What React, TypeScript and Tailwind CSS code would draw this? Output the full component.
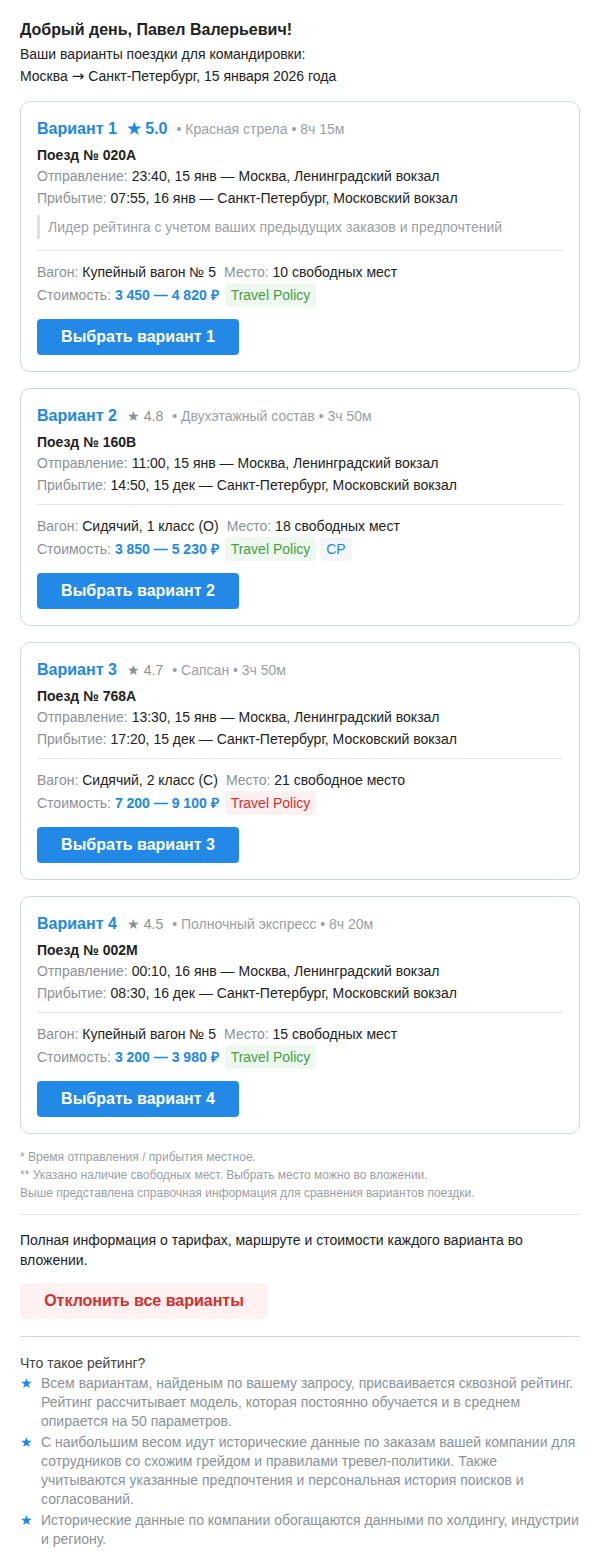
import React from "react";

type V = {
  n: number;
  rating: string;
  top?: boolean;
  name: string;
  dur: string;
  train: string;
  dep: string;
  arr: string;
  note?: string;
  wagon: string;
  seats: string;
  price: string;
  ok: boolean;
  cp?: boolean;
};

const variants: V[] = [
  {
    n: 1,
    rating: "5.0",
    top: true,
    name: "Красная стрела",
    dur: "8ч 15м",
    train: "020А",
    dep: "23:40, 15 янв — Москва, Ленинградский вокзал",
    arr: "07:55, 16 янв — Санкт-Петербург, Московский вокзал",
    note: "Лидер рейтинга с учетом ваших предыдущих заказов и предпочтений",
    wagon: "Купейный вагон № 5",
    seats: "10 свободных мест",
    price: "3 450 — 4 820 ₽",
    ok: true,
  },
  {
    n: 2,
    rating: "4.8",
    name: "Двухэтажный состав",
    dur: "3ч 50м",
    train: "160В",
    dep: "11:00, 15 янв — Москва, Ленинградский вокзал",
    arr: "14:50, 15 дек — Санкт-Петербург, Московский вокзал",
    wagon: "Сидячий, 1 класс (О)",
    seats: "18 свободных мест",
    price: "3 850 — 5 230 ₽",
    ok: true,
    cp: true,
  },
  {
    n: 3,
    rating: "4.7",
    name: "Сапсан",
    dur: "3ч 50м",
    train: "768А",
    dep: "13:30, 15 янв — Москва, Ленинградский вокзал",
    arr: "17:20, 15 дек — Санкт-Петербург, Московский вокзал",
    wagon: "Сидячий, 2 класс (С)",
    seats: "21 свободное место",
    price: "7 200 — 9 100 ₽",
    ok: false,
  },
  {
    n: 4,
    rating: "4.5",
    name: "Полночный экспресс",
    dur: "8ч 20м",
    train: "002М",
    dep: "00:10, 16 янв — Москва, Ленинградский вокзал",
    arr: "08:30, 16 дек — Санкт-Петербург, Московский вокзал",
    wagon: "Купейный вагон № 5",
    seats: "15 свободных мест",
    price: "3 200 — 3 980 ₽",
    ok: true,
  },
];

function Card({ v }: { v: V }) {
  return (
    <div className="mb-4 rounded-[10px] border border-[#cfd8dc] px-4 pt-4 pb-4">
      <div className="flex items-baseline leading-[22px]">
        <span className="text-[16px] font-bold text-[#1e88e5]">Вариант {v.n}</span>
        {v.top ? (
          <span className="ml-[10px] text-[16px] font-bold text-[#1e88e5]">★ {v.rating}</span>
        ) : (
          <span className="ml-[10px] text-[14px] text-[#8a9299]">★ {v.rating}</span>
        )}
        <span className="ml-[9px] text-[14px] text-[#9aa0a6]">
          • {v.name} • {v.dur}
        </span>
      </div>
      <div className="mt-[5px] text-[14px] font-bold leading-[20px] text-[#222]">Поезд № {v.train}</div>
      <div className="text-[14px] leading-[22px] text-[#222]">
        <span className="text-[#8a9299]">Отправление: </span>
        {v.dep}
      </div>
      <div className="text-[14px] leading-[22px] text-[#222]">
        <span className="text-[#8a9299]">Прибытие: </span>
        {v.arr}
      </div>
      {v.note && (
        <div className="mt-[6px] mb-[11px] border-l-[3px] border-[#dfe3e6] pl-[8px] text-[14px] leading-[24px] text-[#9aa0a6]">
          {v.note}
        </div>
      )}
      <div className="mt-[8px] h-px bg-[#e3e8eb]" />
      <div className="mt-[10px] text-[14px] leading-[22px] text-[#222]">
        <span className="text-[#8a9299]">Вагон: </span>
        <span className="mr-[8px]">{v.wagon}</span>
        <span className="text-[#8a9299]">Место: </span>
        {v.seats}
      </div>
      <div className="flex h-[24px] items-center text-[14px]">
        <span className="text-[#8a9299]">Стоимость:&nbsp;</span>
        <span className="font-bold text-[#1e88e5]">{v.price}</span>
        {v.ok ? (
          <span className="ml-[6px] flex h-[24px] items-center rounded-[4px] bg-[#eef8ef] px-[6px] text-[#43a047]">
            Travel Policy
          </span>
        ) : (
          <span className="ml-[6px] flex h-[24px] items-center rounded-[4px] bg-[#fdf0f0] px-[6px] text-[#d32f2f]">
            Travel Policy
          </span>
        )}
        {v.cp && (
          <span className="ml-[4px] flex h-[24px] items-center rounded-[4px] bg-[#f3f5f7] px-[6px] text-[#1e88e5]">
            CP
          </span>
        )}
      </div>
      <div className="mt-[12px] flex">
        <div className="flex h-[36px] w-[202px] items-center justify-center rounded-[4px] bg-[#2289e6] text-[16px] font-bold text-white">
          Выбрать вариант {v.n}
        </div>
      </div>
    </div>
  );
}

export default function App() {
  return (
    <div className="w-[600px] bg-white px-5 pt-[19px] pb-[20px] font-['Liberation_Sans',Arial,sans-serif]">
      <div className="text-[16px] font-bold leading-[22px] text-[#222]">Добрый день, Павел Валерьевич!</div>
      <div className="mt-[2px] text-[14px] leading-[22px] text-[#222]">Ваши варианты поездки для командировки:</div>
      <div className="text-[14px] leading-[22px] text-[#222]">
        Москва <span className="font-['DejaVu_Sans',sans-serif] text-[15px] font-normal">→</span> Санкт-Петербург, 15 января 2026 года
      </div>
      <div className="mt-[14px]">
        {variants.map((v) => (
          <Card key={v.n} v={v} />
        ))}
      </div>
      <div className="-mt-[2px] text-[12px] leading-[18px] text-[#9aa0a6]">
        <div>* Время отправления / прибытия местное.</div>
        <div>** Указано наличие свободных мест. Выбрать место можно во вложении.</div>
        <div>Выше представлена справочная информация для сравнения вариантов поездки.</div>
      </div>
      <div className="mt-[12px] h-px bg-[#e3e8eb]" />
      <div className="mt-[15px] text-[14px] leading-[20px] text-[#222]">
        Полная информация о тарифах, маршруте и стоимости каждого варианта во вложении.
      </div>
      <div className="mt-[13px] flex">
        <div className="flex h-[36px] w-[248px] items-center justify-center rounded-[5px] bg-[#fdf1f1] text-[16px] font-bold text-[#d32f2f]">
          Отклонить все варианты
        </div>
      </div>
      <div className="mt-[17px] h-px bg-[#cfd8dc]" />
      <div className="mt-[16px] text-[14px] leading-[20px] text-[#444]">Что такое рейтинг?</div>
      <div className="mt-[1px] flex flex-col gap-[2px] text-[14px] leading-[19px] text-[#8a9299]">
        <div className="flex">
          <span className="w-[21px] shrink-0 text-[#1e88e5]">★</span>
          <span>
            Всем вариантам, найденым по вашему запросу, присваивается сквозной рейтинг. Рейтинг рассчитывает модель, которая постоянно обучается и в среднем опирается на 50 параметров.
          </span>
        </div>
        <div className="flex">
          <span className="w-[21px] shrink-0 text-[#1e88e5]">★</span>
          <span>
            С наибольшим весом идут исторические данные по заказам вашей компании для сотрудников со схожим грейдом и правилами тревел-политики. Также учитываются указанные предпочтения и персональная история поисков и согласований.
          </span>
        </div>
        <div className="flex">
          <span className="w-[21px] shrink-0 text-[#1e88e5]">★</span>
          <span>
            Исторические данные по компании обогащаются данными по холдингу, индустрии и региону.
          </span>
        </div>
      </div>
    </div>
  );
}
